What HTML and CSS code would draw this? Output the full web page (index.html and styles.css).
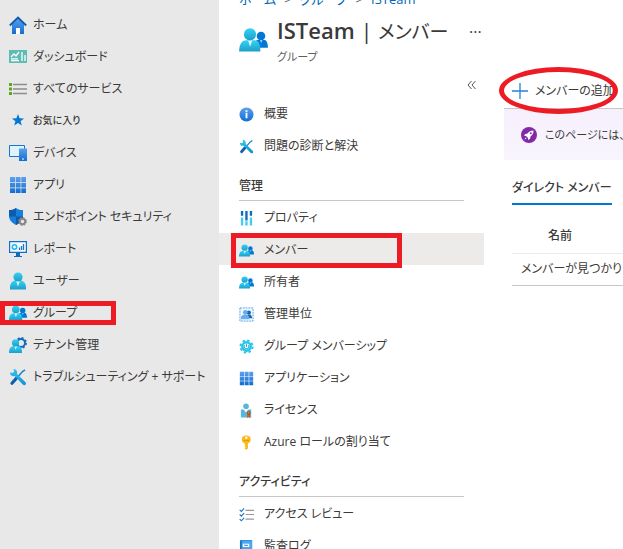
FILE: index.html
```html
<!DOCTYPE html>
<html lang="ja">
<head>
<meta charset="utf-8">
<title>ISTeam | メンバー</title>
<link rel="stylesheet" href="styles.css">
</head>
<body>
<svg class="defs" aria-hidden="true">
  <defs>
    <linearGradient id="cyan" x1="0" y1="0" x2="0" y2="1"><stop offset="0" stop-color="#32d4f5"/><stop offset="1" stop-color="#1f9dc9"/></linearGradient>
    <linearGradient id="blue" x1="0" y1="0" x2="0" y2="1"><stop offset="0" stop-color="#5ea0ef"/><stop offset="1" stop-color="#0f6fd1"/></linearGradient>
    <linearGradient id="tool" x1="0" y1="0" x2="0" y2="1"><stop offset="0" stop-color="#32c8f2"/><stop offset="1" stop-color="#1490cf"/></linearGradient>
  </defs>
  <symbol id="person" viewBox="0 0 18 18"><path fill="url(#cyan)" d="M1 17.5v-2C1 11.500 3 9 6 8.500h6c3 .5 5 3 5 7v2z"/><path fill="#e6faff" d="M7 8.500h4l-2 6z"/><circle cx="9" cy="5" r="4.600" fill="url(#cyan)"/></symbol>
  <symbol id="group" viewBox="0 0 18 15"><circle cx="13.700" cy="5" r="2.700" fill="#0078d4"/><path fill="#0078d4" d="M9 12.300c0-3 1.500-5 3-5h3.400c1.700 0 2.600 2 2.600 5z"/><path fill="#8fd0f5" d="M13 7.500h1.600l-.8 2z"/><path fill="url(#cyan)" d="M0 14.700c0-4 1.500-7 4.500-7h5c3 0 3.800 3 3.800 7z"/><path fill="#e6faff" d="M5.600 7.700h2.600l-1.300 4z"/><circle cx="6.800" cy="4" r="3.800" fill="url(#cyan)"/></symbol>
  <symbol id="apps" viewBox="0 0 18 18"><path fill="url(#blue)" d="M1 1h5v5H1zM6.700 1h4.900v5H6.700zM12.300 1H17v5h-4.700zM1 6.700h5v4.900H1zM6.700 6.700h4.900v4.900H6.700zM12.300 6.700H17v4.900h-4.700zM1 12.300h5V17H1zM6.700 12.300h4.900V17H6.700zM12.300 12.300H17V17h-4.700z"/></symbol>
  <symbol id="tools" viewBox="0 0 18 18"><path d="M16 1.800 13.500 3.500 7 11" fill="none" stroke="#1b86cc" stroke-width="1.600"/><path d="m3 15.300 4.200-4.800" fill="none" stroke="#0b5fae" stroke-width="3.200" stroke-linecap="round"/><path fill="url(#tool)" d="m4.500 1 .6 2.600-1.500 1.500-2.500-.5C.8 7 3 8.700 5.600 8l8.200 8.600c2 1.700 4.200-.4 2.700-2.400L8 6C8.800 3.300 7 .8 4.500 1z"/></symbol>
</svg>

<div class="portal">
  <nav class="sidebar" aria-label="メイン">
    <ul class="list">
      <li><a href="#" class="item"><svg class="icon" viewBox="0 0 18 18"><path fill="url(#blue)" d="M3 7 9 2l6 5v11h-4v-6H7v6H3z"/><path fill="#fff" d="M7 12h4v6H7z"/><path d="m.8 9.500 8.200-8 8.200 8" fill="none" stroke="#0f5ba8" stroke-width="1.800"/></svg>ホーム</a></li>
      <li><a href="#" class="item"><svg class="icon" viewBox="0 0 18 18"><path fill="#5fbcb5" d="M0 2h18v13H0z"/><path d="m2 9 3-3 2 2 3-4M2 10.800h7M2 12.700h8M13 4v9M16 7v6" fill="none" stroke="#fff" stroke-width="1.300"/></svg>ダッシュボード</a></li>
      <li><a href="#" class="item"><svg class="icon" viewBox="0 0 18 18"><path fill="#5ea818" d="M0 3h3v3H0zM0 7.500h3v3H0zM0 12h3v3H0z"/><path d="M4 4.500h14M4 9h14M4 13.500h14" stroke="#8c8c8c" stroke-width="1.500"/></svg>すべてのサービス</a></li>
      <li><a href="#" class="item favorites"><svg class="icon" viewBox="0 0 18 18"><path fill="#0078d4" d="m9 3 1.600 4.200 4.400.2-3.400 2.800 1.200 4.300L9 12l-3.800 2.500 1.200-4.300L3 7.400l4.400-.2z"/></svg>お気に入り</a></li>
      <li><a href="#" class="item"><svg class="icon" viewBox="0 0 18 18"><path fill="#dff3fd" stroke="#1677cc" d="M.5 1.500h15v11H.5z"/><path fill="url(#blue)" d="M10 4.500h8V17h-8z"/><path fill="#fff" d="M13 14.500h2v1h-2z"/></svg>デバイス</a></li>
      <li><a href="#" class="item"><svg class="icon"><use href="#apps"/></svg>アプリ</a></li>
      <li><a href="#" class="item"><svg class="icon" viewBox="0 0 18 18"><path fill="#187edb" d="M7 0c2 1.800 4.500 2 7 2v6c0 4-3 7-7 9-4-2-7-5-7-9V2c2.500 0 5-.2 7-2z"/><path fill="#0b5cae" d="M7 0v8.500H0V2c2.500 0 5-.2 7-2zM7 8.500h7c0 4-3 6.500-7 8.500z"/><circle cx="13.500" cy="13.500" r="2.700" fill="#e8e8e8" stroke="#8a8886" stroke-width="2"/><circle cx="13.500" cy="13.500" r="3.800" fill="none" stroke="#8a8886" stroke-width="1.200" stroke-dasharray="1.500"/></svg>エンドポイント セキュリティ</a></li>
      <li><a href="#" class="item"><svg class="icon" viewBox="0 0 18 18"><path fill="#f5fbff" stroke="#1270c4" stroke-width="1.200" d="M.6 1.600h16.800v10.800H.6z"/><path fill="#0f6cbd" d="M7 13h4v3h2v1H5v-1h2z"/><circle cx="5.500" cy="7" r="2.200" fill="none" stroke="#20b6e5" stroke-width="1.500"/><path d="M10.500 10V7.500M12.500 10V6M14.500 10V4" stroke="#1677cc" stroke-width="1.300"/></svg>レポート</a></li>
      <li><a href="#" class="item"><svg class="icon"><use href="#person"/></svg>ユーザー</a></li>
      <li><a href="#" class="item" aria-current="true"><svg class="icon"><use href="#group"/></svg>グループ</a><span class="mark mark-group"></span></li>
      <li><a href="#" class="item"><svg class="icon" viewBox="0 0 18 18"><circle cx="12" cy="7" r="4" fill="none" stroke="#0f6cbd" stroke-width="2"/><circle cx="12" cy="7" r="5.200" fill="none" stroke="#0f6cbd" stroke-width="1.500" stroke-dasharray="2 2.080"/><path fill="url(#cyan)" d="M0 17c0-5 2-7 4.500-7H9c3 0 4 2 4 7z"/><path fill="#e6faff" d="M5.500 10h2.400l-1.200 4z"/><circle cx="6.500" cy="6.800" r="3.600" fill="url(#cyan)"/></svg>テナント管理</a></li>
      <li><a href="#" class="item"><svg class="icon"><use href="#tools"/></svg>トラブルシューティング + サポート</a></li>
    </ul>
  </nav>

  <main class="page">
    <nav class="breadcrumb" aria-label="階層"><a href="#">ホーム</a><span>&gt;</span><a href="#">グループ</a><span>&gt;</span><a href="#">ISTeam</a></nav>
    <header class="heading">
      <svg class="heading-icon"><use href="#group"/></svg>
      <div>
        <h1>ISTeam <span class="light">| </span><span class="medium">メンバー</span></h1>
        <p>グループ</p>
      </div>
      <button class="more" type="button" aria-label="その他">···</button>
    </header>

    <div class="columns">
      <nav class="menu" aria-label="グループ">
        <div class="collapse-row"><button class="collapse" type="button" aria-label="折りたたむ"><svg viewBox="0 0 10 10"><path d="M4.500 1 1 5l3.500 4M8.500 1 5 5l3.500 4" fill="none" stroke="#555"/></svg></button></div>
        <ul class="list">
          <li><a href="#" class="item"><svg class="icon" viewBox="0 0 16 16"><circle cx="8" cy="8" r="7.500" fill="url(#blue)"/><path fill="#fff" d="M7 3.500h2v2H7zM7 6.500h2V12H7z"/></svg>概要</a></li>
          <li><a href="#" class="item"><svg class="icon"><use href="#tools"/></svg>問題の診断と解決</a></li>
        </ul>
        <h2>管理</h2>
        <ul class="list">
          <li><a href="#" class="item"><svg class="icon" viewBox="0 0 16 16"><path fill="#42cdef" d="M2 7h2.500v8.500H2zM6.700 11h2.500v4.500H6.700zM11.500 7H14v8.500h-2.500z"/><path fill="#0f6cbd" d="M2 0h2.500v5H2zM6.700 0h2.500v10H6.700zM11.500 0H14v5h-2.500z"/></svg>プロパティ</a></li>
          <li><a href="#" class="item selected" aria-current="page"><svg class="icon"><use href="#group"/></svg>メンバー</a><span class="mark mark-member"></span></li>
          <li><a href="#" class="item"><svg class="icon"><use href="#group"/></svg>所有者</a></li>
          <li><a href="#" class="item"><svg class="icon" viewBox="0 0 16 16"><path fill="#f3faff" stroke="#45a0e8" stroke-dasharray="2 1" d="M1 1h14v14H1z"/><circle cx="10.500" cy="6" r="2.300" fill="#1968b8"/><path fill="#1968b8" d="M8 12c0-3 1-4 3-4s3 2 3 4z"/><circle cx="6.700" cy="5.700" r="2.500" fill="#69aaf0"/><path fill="#69aaf0" d="M2 13c0-4 2-5 4.500-5S11 9 11 13z"/></svg>管理単位</a></li>
          <li><a href="#" class="item"><svg class="icon" viewBox="0 0 16 16"><circle cx="8" cy="8" r="4.500" fill="none" stroke="#28c5eb" stroke-width="2.600"/><circle cx="8" cy="8" r="6.500" fill="none" stroke="#28c5eb" stroke-width="2" stroke-dasharray="2.600 2.500"/><path d="M8 5v3.500M6 6.500a2.500 2.500 0 1 0 4 0" fill="none" stroke="#28b5e0" stroke-width="1.200"/></svg>グループ メンバーシップ</a></li>
          <li><a href="#" class="item"><svg class="icon"><use href="#apps"/></svg>アプリケーション</a></li>
          <li><a href="#" class="item"><svg class="icon" viewBox="0 0 16 16"><circle cx="7.500" cy="3.500" r="3" fill="#5ab5de"/><path fill="#5ab5de" d="M2 7h3l2.500 3L10 7h3v8.500H2z"/><path fill="#d65a1e" d="m9 11-.5 5 1.800-1 1.900 1-.5-5z"/><circle cx="10.400" cy="10.500" r="2" fill="#a84b20"/><circle cx="10.400" cy="10.500" r=".8" fill="#f6a43a"/></svg>ライセンス</a></li>
          <li><a href="#" class="item"><svg class="icon" viewBox="0 0 16 16"><path fill="#fbb917" d="M7.500.5c3 0 5 1.700 5 4.200 0 2-1.200 3.500-3 4v5.800l-1.700 1.300L6 14.500l1-1.200-1-1.200 1-1.200-1-1v-1.200c-1.800-.5-3-2-3-4C3 2.200 4.700.5 7.500.5z"/><circle cx="7.700" cy="2.800" r="1.300" fill="#fff"/><path d="M4.800 6h6" stroke="#e09600"/></svg>Azure ロールの割り当て</a></li>
        </ul>
        <h2>アクティビティ</h2>
        <ul class="list">
          <li><a href="#" class="item"><svg class="icon" viewBox="0 0 16 16"><path d="M7 3.500h9M7 8h9M7 13h9" stroke="#999" stroke-width="1.300"/><path d="m.7 3 1.800 1.700L5.500 1.500M.7 8l1.800 1.700 3-3.200M.7 13l1.800 1.700 3-3.200" fill="none" stroke="#1677cc" stroke-width="1.200"/></svg>アクセス レビュー</a></li>
          <li><a href="#" class="item"><svg class="icon" viewBox="0 0 16 16"><path fill="#1b72c4" d="M2.500 1H14v14H2.500A1.500 1.500 0 0 1 1 13.500v-11A1.500 1.500 0 0 1 2.500 1z"/><path fill="#4ba7ee" d="M3 1.500h11V13H3z"/><path fill="#fff" d="M4 5h7v3.500H4z"/><path d="M5.500 6.700h4" stroke="#1b72c4"/></svg>監査ログ</a></li>
        </ul>
      </nav>

      <section class="content">
        <div class="toolbar">
          <button class="add" type="button"><svg viewBox="0 0 16 16"><path d="M8 0v16M0 8h16" stroke="#2583d5" stroke-width="1.300"/></svg>メンバーの追加<span class="mark mark-add"></span></button>
        </div>
        <div class="banner"><svg viewBox="0 0 16 16"><circle cx="8" cy="8" r="8" fill="#8229a8"/><path fill="#fff" d="M12.500 3.500c-3 0-4.500 1-6 3l-2.200.4L3 8.800l2 .2 2 2 .2 2 1.900-1.300.4-2.200c2-1.500 3-3 3-6zM4.500 10.500l1 1-2 1z"/><circle cx="9.800" cy="6.200" r="1" fill="#8229a8"/></svg><span>このページには、評価に利用できるプレビューがあります。</span></div>
        <div class="tabs" role="tablist"><button class="tab" type="button" role="tab" aria-selected="true">ダイレクト メンバー</button></div>
        <table class="members">
          <thead><tr><th scope="col">名前</th></tr></thead>
          <tbody><tr><td>メンバーが見つかりません</td></tr></tbody>
        </table>
      </section>
    </div>
  </main>
</div>
</body>
</html>
```
FILE: styles.css
```css
* { box-sizing: border-box; }

body {
  margin: 0;
  height: 100vh;
  overflow: hidden;
  background: #fff;
  color: #3b3a39;
  font: 12px/20px "Open Sans", "Noto Sans CJK JP", sans-serif;
  font-feature-settings: "palt";
}

h1, h2, p { margin: 0; }
a { color: inherit; text-decoration: none; }

button {
  padding: 0;
  border: 0;
  background: none;
  color: inherit;
  font: inherit;
  font-feature-settings: inherit;
  white-space: nowrap;
}

.defs { position: absolute; width: 0; height: 0; }

.portal { display: flex; min-height: 100vh; }

.sidebar {
  flex: 0 0 219px;
  min-width: 0;
  padding-top: 8px;
  background: #e8e8e8;
}

.list { margin: 0; padding: 0; list-style: none; }
.list li { position: relative; }

.item {
  display: flex;
  align-items: center;
  gap: 6px;
  height: 32px;
  padding: 2px 0 0 9px;
  white-space: nowrap;
}

.icon { flex: none; width: 18px; height: 18px; }
.favorites { padding-top: 0; font-size: 10px; font-weight: 500; }

.page { flex: 1; min-width: 0; }

.breadcrumb {
  display: flex;
  align-items: flex-end;
  gap: 8px;
  height: 9px;
  padding-left: 20px;
  overflow: hidden;
  color: #0067b8;
  font-size: 13px;
}
.breadcrumb span { color: #605e5c; }

.heading {
  display: flex;
  align-items: flex-start;
  height: 64px;
  padding: 6px 0 0 20px;
}
.heading > div { width: 192px; margin-left: 9px; white-space: nowrap; }
.heading-icon { flex: none; width: 29px; height: 24px; margin-top: 13px; }
.heading h1 { font-size: 22px; font-weight: 600; line-height: 31px; }
.heading .light { font-weight: 400; }
.heading .medium { font-weight: 400; font-size: 19px; }
.heading p { font-size: 11px; line-height: 18px; color: #605e5c; }
.more { font-size: 16px; line-height: 34px; }

.columns { display: flex; }

.menu { flex: 0 0 265px; }
.menu .item { gap: 10px; padding-left: 20px; }
.menu .icon { width: 15px; height: 15px; }
.menu .selected { background: #edebe9; }
.menu h2 {
  height: 40px;
  margin: 0 20px;
  padding-top: 15px;
  border-bottom: 1px solid #c8c6c4;
  font-size: 12px;
  font-weight: 500;
}

.collapse-row { display: flex; justify-content: flex-end; height: 24px; padding-right: 7px; }
.collapse { display: flex; align-items: center; height: 24px; }
.collapse svg { width: 10px; height: 10px; }

.content { flex: 1; min-width: 0; padding-left: 20px; }

.toolbar {
  height: 36px;
  border-bottom: 1px solid #c8c6c4;
}
.add {
  position: relative;
  display: flex;
  align-items: center;
  gap: 7px;
  height: 36px;
  padding-left: 8px;
}
.add svg { width: 16px; height: 16px; }

.banner {
  display: flex;
  align-items: center;
  gap: 8px;
  height: 51px;
  padding-left: 17px;
  overflow: hidden;
  background: linear-gradient(#f6f0fc, #f8f5fe);
  font-size: 11px;
  white-space: nowrap;
}
.banner svg { flex: none; width: 16px; height: 16px; }

.tabs { padding: 12px 0 0 8px; }
.tab {
  height: 33px;
  border-bottom: 2px solid #0078d4;
  font-weight: 500;
}

.members {
  width: calc(100% - 8px);
  margin-left: 8px;
  border-collapse: collapse;
  table-layout: fixed;
  text-align: left;
  white-space: nowrap;
}
.members th {
  height: 48px;
  padding: 14px 0 0 36px;
  border-bottom: 1px solid #edebe9;
  font-weight: 500;
}
.members td {
  height: 32px;
  padding: 0 0 0 9px;
  overflow: hidden;
  border-bottom: 1px solid #c8c6c4;
}

/* Red call-outs drawn over the interface */
.mark {
  position: absolute;
  z-index: 1;
  border: 5px solid #ed1c24;
  pointer-events: none;
}
.mark-group { top: 5px; left: 0; width: 116px; height: 24px; }
.mark-member { top: 0; left: 12px; width: 171px; height: 35px; }
.mark-add { top: -6px; left: -5px; width: 119px; height: 47px; border-radius: 50%; }
```
